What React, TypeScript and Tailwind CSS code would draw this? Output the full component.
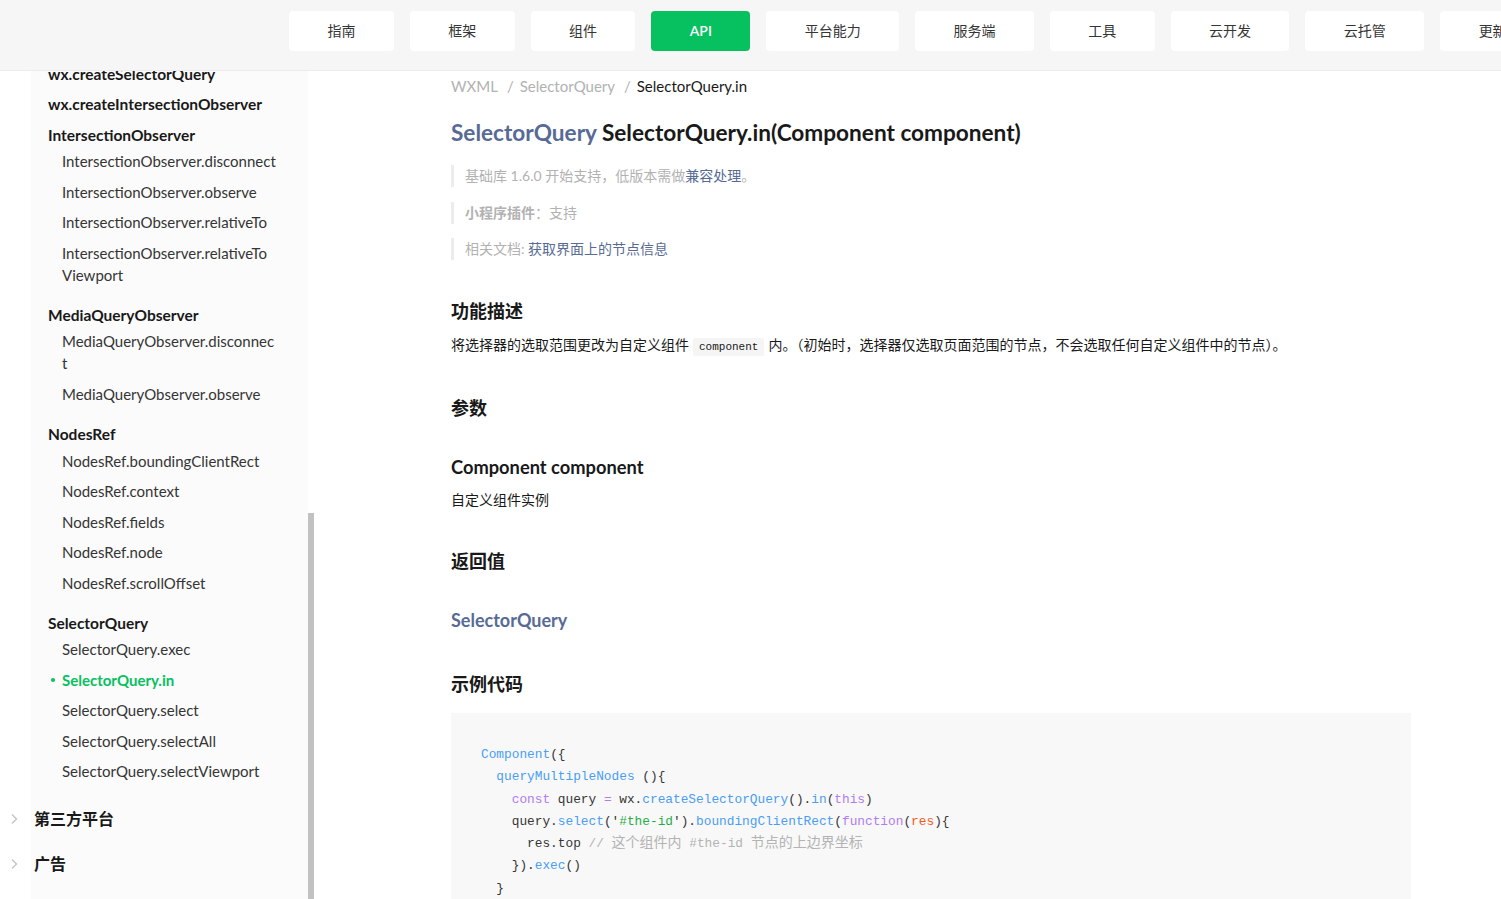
const navItems = ["指南", "框架", "组件", "API", "平台能力", "服务端", "工具", "云开发", "云托管", "更新日志"];

type Group = { title: string; children?: { lines: string[]; active?: boolean }[] };

const groups: Group[] = [
  { title: "wx.createSelectorQuery" },
  { title: "wx.createIntersectionObserver" },
  {
    title: "IntersectionObserver",
    children: [
      { lines: ["IntersectionObserver.disconnect"] },
      { lines: ["IntersectionObserver.observe"] },
      { lines: ["IntersectionObserver.relativeTo"] },
      { lines: ["IntersectionObserver.relativeTo", "Viewport"] },
    ],
  },
  {
    title: "MediaQueryObserver",
    children: [
      { lines: ["MediaQueryObserver.disconnec", "t"] },
      { lines: ["MediaQueryObserver.observe"] },
    ],
  },
  {
    title: "NodesRef",
    children: [
      { lines: ["NodesRef.boundingClientRect"] },
      { lines: ["NodesRef.context"] },
      { lines: ["NodesRef.fields"] },
      { lines: ["NodesRef.node"] },
      { lines: ["NodesRef.scrollOffset"] },
    ],
  },
  {
    title: "SelectorQuery",
    children: [
      { lines: ["SelectorQuery.exec"] },
      { lines: ["SelectorQuery.in"], active: true },
      { lines: ["SelectorQuery.select"] },
      { lines: ["SelectorQuery.selectAll"] },
      { lines: ["SelectorQuery.selectViewport"] },
    ],
  },
];

function Chevron() {
  return (
    <svg width="7" height="12" viewBox="0 0 7 12" className="shrink-0">
      <polyline points="1,1.5 5.5,6 1,10.5" fill="none" stroke="#c4c4c4" strokeWidth="1.4" />
    </svg>
  );
}

// code colours
const B = "text-[#4a9df5]";
const P = "text-[#b07cf2]";
const G = "text-[#1fae45]";
const O = "text-[#f25a22]";
const C = "text-[#b3b3b3]";

function Sidebar() {
  return (
    <div className="flex w-[314px] shrink-0 overflow-hidden">
      <div className="w-[308px] bg-[linear-gradient(to_right,#ffffff_31px,#fbfbfb_31px)]">
        <div className="-mt-[12.5px] pl-[31px]">
          {groups.map((g) => (
            <div key={g.title} className={g.children ? "mb-[10px]" : ""}>
              <div
                className={`pl-[17px] pt-[4.25px] text-[15.5px] leading-[22px] font-bold text-[#191919] ${
                  g.children ? "" : "pb-[4.25px]"
                }`}
              >
                {g.title}
              </div>
              {g.children?.map((c) => (
                <div
                  key={c.lines.join("")}
                  className={`relative py-[4.25px] pl-[31px] text-[15px] leading-[22px] ${
                    c.active ? "font-bold text-[#07c160]" : "text-[#353535]"
                  }`}
                >
                  {c.active && (
                    <span className="absolute left-[20px] top-[13.5px] h-[4px] w-[4px] rounded-full bg-[#07c160]" />
                  )}
                  {c.lines.map((l) => (
                    <div key={l} className="whitespace-nowrap">
                      {l}
                    </div>
                  ))}
                </div>
              ))}
            </div>
          ))}
        </div>
        {["第三方平台", "广告"].map((t) => (
          <div key={t} className="flex items-center py-[11.5px] pl-[11px]">
            <Chevron />
            <span className="ml-[16px] text-[16px] leading-[22px] font-bold text-[#191919]">{t}</span>
          </div>
        ))}
      </div>
      <div className="flex w-[6px] flex-col">
        <div className="h-[442px] shrink-0" />
        <div className="flex-1 bg-[#c1c1c1]" />
      </div>
    </div>
  );
}

function Main() {
  return (
    <div className="min-w-0 flex-1 pl-[137px] pr-[90px] pt-[4px] text-[#191919]">
      <div className="flex text-[15px] leading-[22px] text-[#b2b2b2]">
        <span>WXML</span>
        <span className="ml-[9px]">/</span>
        <span className="ml-[6px]">SelectorQuery</span>
        <span className="ml-[9px]">/</span>
        <span className="ml-[6px] text-[#191919]">SelectorQuery.in</span>
      </div>

      <h1 className="mt-[21px] text-[22.6px] leading-[30px] font-bold">
        <span className="text-[#576b95]">SelectorQuery</span> SelectorQuery.in(Component component)
      </h1>

      <div className="mt-[17px] border-l-[3px] border-[#ececec] pl-[11px] text-[14px] leading-[22px] text-[#b2b2b2]">
        基础库 1.6.0 开始支持，低版本需做<span className="text-[#576b95]">兼容处理</span>。
      </div>
      <div className="mt-[15px] border-l-[3px] border-[#ececec] pl-[11px] text-[14px] leading-[22px] text-[#b2b2b2]">
        <span className="font-bold">小程序插件</span>：支持
      </div>
      <div className="mt-[14px] border-l-[3px] border-[#ececec] pl-[11px] text-[14px] leading-[22px] text-[#b2b2b2]">
        相关文档: <span className="text-[#576b95]">获取界面上的节点信息</span>
      </div>

      <h2 className="mt-[38px] text-[18px] leading-[26px] font-bold">功能描述</h2>
      <p className="mt-[10px] text-[14px] leading-[22px] text-[#191919]">
        将选择器的选取范围更改为自定义组件
        <code className="mx-[4px] rounded-[2px] bg-[#f5f5f5] px-[6px] py-[3px] font-['Liberation_Mono',monospace] text-[11px] leading-none">
          component
        </code>
        内。（初始时，选择器仅选取页面范围的节点，不会选取任何自定义组件中的节点）。
      </p>

      <h2 className="mt-[39px] text-[18px] leading-[26px] font-bold">参数</h2>
      <h3 className="mt-[34px] text-[18.3px] leading-[24px] font-bold">Component component</h3>
      <p className="mt-[10px] text-[14px] leading-[22px]">自定义组件实例</p>

      <h2 className="mt-[37px] text-[18px] leading-[26px] font-bold">返回值</h2>
      <div className="mt-[34px] text-[18px] leading-[24px] font-bold text-[#576b95]">SelectorQuery</div>

      <h2 className="mt-[39px] text-[18px] leading-[26px] font-bold">示例代码</h2>

      <pre className="mt-[16px] bg-[#f8f8f8] px-[30px] pt-[31px] pb-[30px] font-['Liberation_Mono','Noto_Sans_CJK_SC',monospace] text-[12.8px] leading-[22.3px] text-[#353535]">
        <div>
          <span className={B}>Component</span>({"{"}
        </div>
        <div>
          {"  "}
          <span className={B}>queryMultipleNodes</span> (){"{"}
        </div>
        <div>
          {"    "}
          <span className={P}>const</span> query <span className={P}>=</span> wx.
          <span className={B}>createSelectorQuery</span>().<span className={B}>in</span>(
          <span className={P}>this</span>)
        </div>
        <div>
          {"    "}query.<span className={B}>select</span>('<span className={G}>#the-id</span>').
          <span className={B}>boundingClientRect</span>(<span className={P}>function</span>(
          <span className={O}>res</span>){"{"}
        </div>
        <div>
          {"      "}res.top{" "}
          <span className={C}>
            // <span className="text-[14px] leading-none">这个组件内</span> #the-id{" "}
            <span className="text-[14px] leading-none">节点的上边界坐标</span>
          </span>
        </div>
        <div>
          {"    "}
          {"})."}
          <span className={B}>exec</span>()
        </div>
        <div>{"  }"}</div>
        <div>{"})"}</div>
      </pre>
    </div>
  );
}

export default function App() {
  return (
    <div className="flex h-[899px] w-[1501px] flex-col overflow-hidden bg-white font-['Lato','Noto_Sans_CJK_SC',sans-serif]">
      <header className="h-[71px] shrink-0 border-b border-[#ececec] bg-[#f6f6f6]">
        <nav className="flex gap-4 pl-[289px] pt-[11px]">
          {navItems.map((n) => (
            <div
              key={n}
              className={`flex h-10 shrink-0 items-center rounded-[4px] px-[38.4px] text-[14px] leading-[20px] ${
                n === "API" ? "bg-[#07c160] font-semibold text-white" : "bg-white text-[#353535]"
              }`}
            >
              {n}
            </div>
          ))}
        </nav>
      </header>
      <div className="flex min-h-0 flex-1">
        <Sidebar />
        <Main />
      </div>
    </div>
  );
}
